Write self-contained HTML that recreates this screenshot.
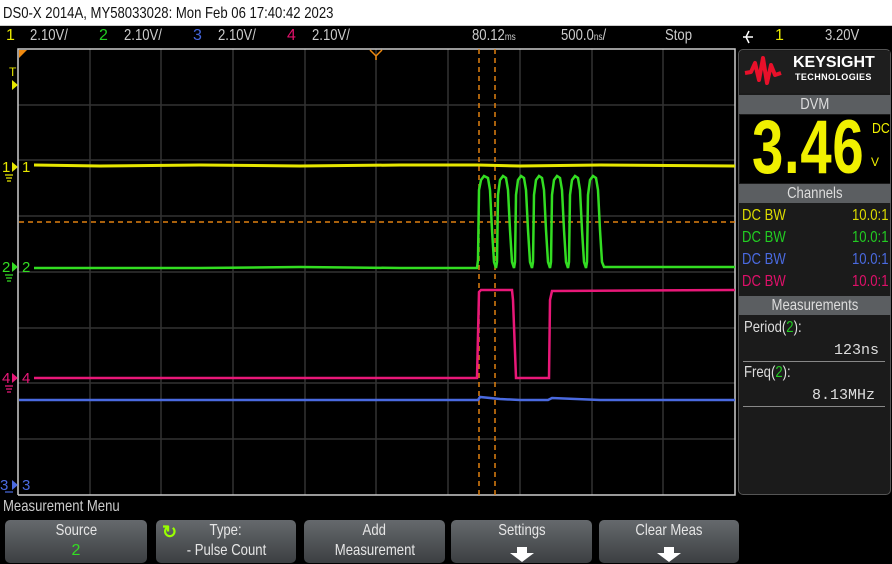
<!DOCTYPE html>
<html><head><meta charset="utf-8"><style>
*{margin:0;padding:0;box-sizing:border-box}
body{width:892px;height:564px;background:#000;position:relative;overflow:hidden;font-family:"Liberation Sans",sans-serif;color:#ddd}
.a{position:absolute;white-space:nowrap}
.n{display:inline-block;transform:scaleX(.82);transform-origin:left center}
.c{display:inline-block;transform:scaleX(.82);transform-origin:center}
.title{left:0;top:0;width:892px;height:26px;background:#fff;color:#111;font-size:16px;line-height:27px;padding-left:3px;border-bottom:1px solid #ccc}
.row{top:26px;font-size:16px;line-height:20px;color:#ccc}
.hdr{position:absolute;left:739px;width:152px;height:19px;background:#5b5e61;color:#ddd;text-align:center;font-size:16px;line-height:19px}
.btn{position:absolute;top:520px;height:43px;border-radius:5px;background:linear-gradient(#65696d,#3c3f42);color:#e6e6e6;text-align:center;font-size:16px;line-height:20px;padding-top:1px}
.arrow{width:0;height:0;border-left:12px solid transparent;border-right:12px solid transparent;border-top:9px solid #fff;margin:4px auto 0;position:relative}
.arrow:before{content:"";position:absolute;left:-5px;top:-15px;width:10px;height:7px;background:#fff}
.cr{position:absolute;left:742px;width:146px;font-size:16px;line-height:22px}
.cr .r{position:absolute;right:0;display:inline-block;transform:scaleX(.82);transform-origin:right center}
</style></head><body>
<div class="a title"><span class="n">DS0-X 2014A, MY58033028: Mon Feb 06 17:40:42 2023</span></div>
<div class="a row" style="left:6px;color:#e8e800">1</div>
<div class="a row" style="left:30px"><span class="n">2.10V/</span></div>
<div class="a row" style="left:99px;color:#22cc22">2</div>
<div class="a row" style="left:124px"><span class="n">2.10V/</span></div>
<div class="a row" style="left:193px;color:#4466dd">3</div>
<div class="a row" style="left:218px"><span class="n">2.10V/</span></div>
<div class="a row" style="left:287px;color:#e0106a">4</div>
<div class="a row" style="left:312px"><span class="n">2.10V/</span></div>
<div class="a row" style="left:472px"><span class="n">80.12<span style="font-size:10px">ms</span></span></div>
<div class="a row" style="left:561px"><span class="n">500.0<span style="font-size:10px">ns</span>/</span></div>
<div class="a row" style="left:665px"><span class="n">Stop</span></div>
<svg class="a" style="left:742px;top:30px" width="12" height="14"><path d="M1,7 H11 M7,1 L4,7 L7,13" stroke="#fff" stroke-width="1.5" fill="none"/></svg>
<div class="a row" style="left:775px;color:#e8e800">1</div>
<div class="a row" style="left:825px"><span class="n">3.20V</span></div>

<svg class="a" style="left:0;top:0" width="892" height="564">
<g stroke="#333" stroke-width="1.5">
<line x1="90" y1="49" x2="90" y2="495"/><line x1="161" y1="49" x2="161" y2="495"/><line x1="233" y1="49" x2="233" y2="495"/><line x1="305" y1="49" x2="305" y2="495"/><line x1="376" y1="49" x2="376" y2="495"/><line x1="448" y1="49" x2="448" y2="495"/><line x1="520" y1="49" x2="520" y2="495"/><line x1="592" y1="49" x2="592" y2="495"/><line x1="663" y1="49" x2="663" y2="495"/>
<line x1="18" y1="105" x2="735" y2="105"/><line x1="18" y1="160" x2="735" y2="160"/><line x1="18" y1="216" x2="735" y2="216"/><line x1="18" y1="272" x2="735" y2="272"/><line x1="18" y1="328" x2="735" y2="328"/><line x1="18" y1="383" x2="735" y2="383"/><line x1="18" y1="439" x2="735" y2="439"/>
</g>
<polyline points="18,495 18,49 735,49 735,495 18,495" fill="none" stroke="#ccc" stroke-width="1.5"/>
<polygon points="19,50 27,50 19,58" fill="#f08a10"/>
<path d="M370,50 L376,56 L382,50 M376,56 v4" stroke="#f08a10" stroke-width="1.5" fill="none"/>
<g stroke="#e08010" stroke-width="1.5" stroke-dasharray="5,4">
<line x1="479" y1="49" x2="479" y2="495"/><line x1="495" y1="49" x2="495" y2="495"/>
<line x1="19" y1="222" x2="735" y2="222"/>
</g>
<polyline fill="none" stroke="#e6e600" stroke-width="3" points="34,165 100,166 200,165 300,166 400,165 478,165 520,166 600,165 735,166"/>
<polyline fill="none" stroke="#33dd22" stroke-width="2.5" points="34,268 200,268 300,267 400,268 477,268 478,260 479,190 481,180 484,176 488,178 490,190 492,230 494,262 496,268 497,262 498,195 500,180 503,176 506,178 508,190 510,230 512,262 514,268 515,262 516,195 518,180 521,176 524,178 526,190 528,230 530,262 532,268 533,262 534,195 536,180 539,176 542,178 544,190 546,230 548,262 550,268 551,262 552,195 554,180 557,176 560,178 562,190 564,230 566,262 568,268 569,262 570,195 572,180 575,176 578,178 580,190 582,230 584,262 586,268 587,262 588,195 590,180 593,176 596,178 598,190 600,230 602,262 604,267 650,267 735,267"/>
<polyline fill="none" stroke="#e81878" stroke-width="2.5" points="34,378 300,378 477,378 479,292 481,290 512,290 513,300 516,378 549,378 550,300 552,291 735,290"/>
<polyline fill="none" stroke="#4a6ae0" stroke-width="2.5" points="19,400 300,400 478,400 480,397 500,399 520,400 548,400 552,398 600,400 735,400"/>
<g font-family="Liberation Sans,sans-serif" font-size="15">
<text x="2" y="172" fill="#e6e600">1</text><text x="22" y="172" fill="#e6e600">1</text>
<text x="2" y="272" fill="#33dd22">2</text><text x="22" y="272" fill="#33dd22">2</text>
<text x="2" y="383" fill="#e81878">4</text><text x="22" y="383" fill="#e81878">4</text>
<text x="0" y="490" fill="#4a6ae0">3</text><text x="22" y="490" fill="#4a6ae0">3</text>
<text x="9" y="76" fill="#e6e600" font-size="12">T</text>
</g>
<polygon points="12,80 18,85 12,90" fill="#e6e600"/>
<polygon points="12,162 18,167 12,172" fill="#e6e600"/><polygon points="12,262 18,267 12,272" fill="#33dd22"/><polygon points="12,373 18,378 12,383" fill="#e81878"/><polygon points="12,480 18,485 12,490" fill="#4a6ae0"/>
<g stroke-width="1.2"><path d="M5,175 h8 M6,178 h6 M7,181 h4" stroke="#e6e600"/><path d="M5,275 h8 M6,278 h6 M7,281 h4" stroke="#33dd22"/><path d="M5,386 h8 M6,389 h6 M7,392 h4" stroke="#e81878"/><path d="M5,492 h8" stroke="#4a6ae0"/></g>
</svg>

<div class="a" style="left:738px;top:49px;width:153px;height:446px;background:#1b1b1b;border:1px solid #555;border-radius:5px"></div>
<div class="a" style="left:740px;top:51px;width:150px;height:42px;background:#1e1e1e"></div>
<svg class="a" style="left:743px;top:55px" width="40" height="32"><path d="M2,18 L8,17 L12,8 L16,25 L20,3 L24,28 L28,10 L32,20 L38,18" fill="none" stroke="#e8102a" stroke-width="4" stroke-linejoin="round"/></svg>
<div class="a" style="left:793px;top:54px;color:#fff;font-weight:bold;font-size:16px;line-height:18px">KEYSIGHT</div>
<div class="a" style="left:795px;top:72px;color:#fff;font-size:9px;font-weight:bold;letter-spacing:.4px">TECHNOLOGIES</div>
<div class="hdr" style="top:95px"><span class="c">DVM</span></div>
<div class="a" style="left:740px;top:115px;width:150px;height:68px;background:#000"></div>
<div class="a" style="left:752px;top:106px;color:#f0f000;font-size:76px;font-weight:bold;line-height:84px;letter-spacing:1px;transform:scaleX(.74);transform-origin:left">3.46</div>
<div class="a" style="left:872px;top:120px;color:#f0f000;font-size:15px"><span class="n">DC</span></div>
<div class="a" style="left:871px;top:155px;color:#f0f000;font-size:12px">V</div>
<div class="hdr" style="top:184px"><span class="c">Channels</span></div>
<div class="cr" style="top:205px;color:#dddd00"><span class="n">DC BW</span><span class="r">10.0:1</span></div>
<div class="cr" style="top:227px;color:#22cc22"><span class="n">DC BW</span><span class="r">10.0:1</span></div>
<div class="cr" style="top:249px;color:#4a6ae0"><span class="n">DC BW</span><span class="r">10.0:1</span></div>
<div class="cr" style="top:271px;color:#e0106a"><span class="n">DC BW</span><span class="r">10.0:1</span></div>
<div class="hdr" style="top:296px"><span class="c">Measurements</span></div>
<div class="a" style="left:744px;top:319px;font-size:16px;color:#ddd"><span class="n">Period(<span style="color:#22cc22">2</span>):</span></div>
<div class="a" style="left:834px;top:342px;color:#ddd;font-family:'Liberation Mono',monospace;font-size:15px">123ns</div>
<div class="a" style="left:743px;top:361px;width:142px;height:1px;background:#888"></div>
<div class="a" style="left:744px;top:364px;font-size:16px;color:#ddd"><span class="n">Freq(<span style="color:#22cc22">2</span>):</span></div>
<div class="a" style="left:812px;top:387px;color:#ddd;font-family:'Liberation Mono',monospace;font-size:15px">8.13MHz</div>
<div class="a" style="left:743px;top:406px;width:142px;height:1px;background:#888"></div>

<div class="a" style="left:3px;top:498px;font-size:16px;color:#ccc"><span class="n">Measurement Menu</span></div>
<div class="btn" style="left:5px;width:142px"><span class="c">Source</span><br><span style="color:#33dd22">2</span></div>
<div class="btn" style="left:156px;width:140px"><span class="c">Type:</span><br><span class="c">- Pulse Count</span><span style="position:absolute;left:6px;top:2px;color:#9f0;font-weight:bold;font-size:18px">&#x21BB;</span></div>
<div class="btn" style="left:304px;width:141px"><span class="c">Add</span><br><span class="c">Measurement</span></div>
<div class="btn" style="left:451px;width:141px"><span class="c">Settings</span><div class="arrow" style="margin-top:12px"></div></div>
<div class="btn" style="left:599px;width:140px"><span class="c">Clear Meas</span><div class="arrow" style="margin-top:12px"></div></div>
</body></html>
